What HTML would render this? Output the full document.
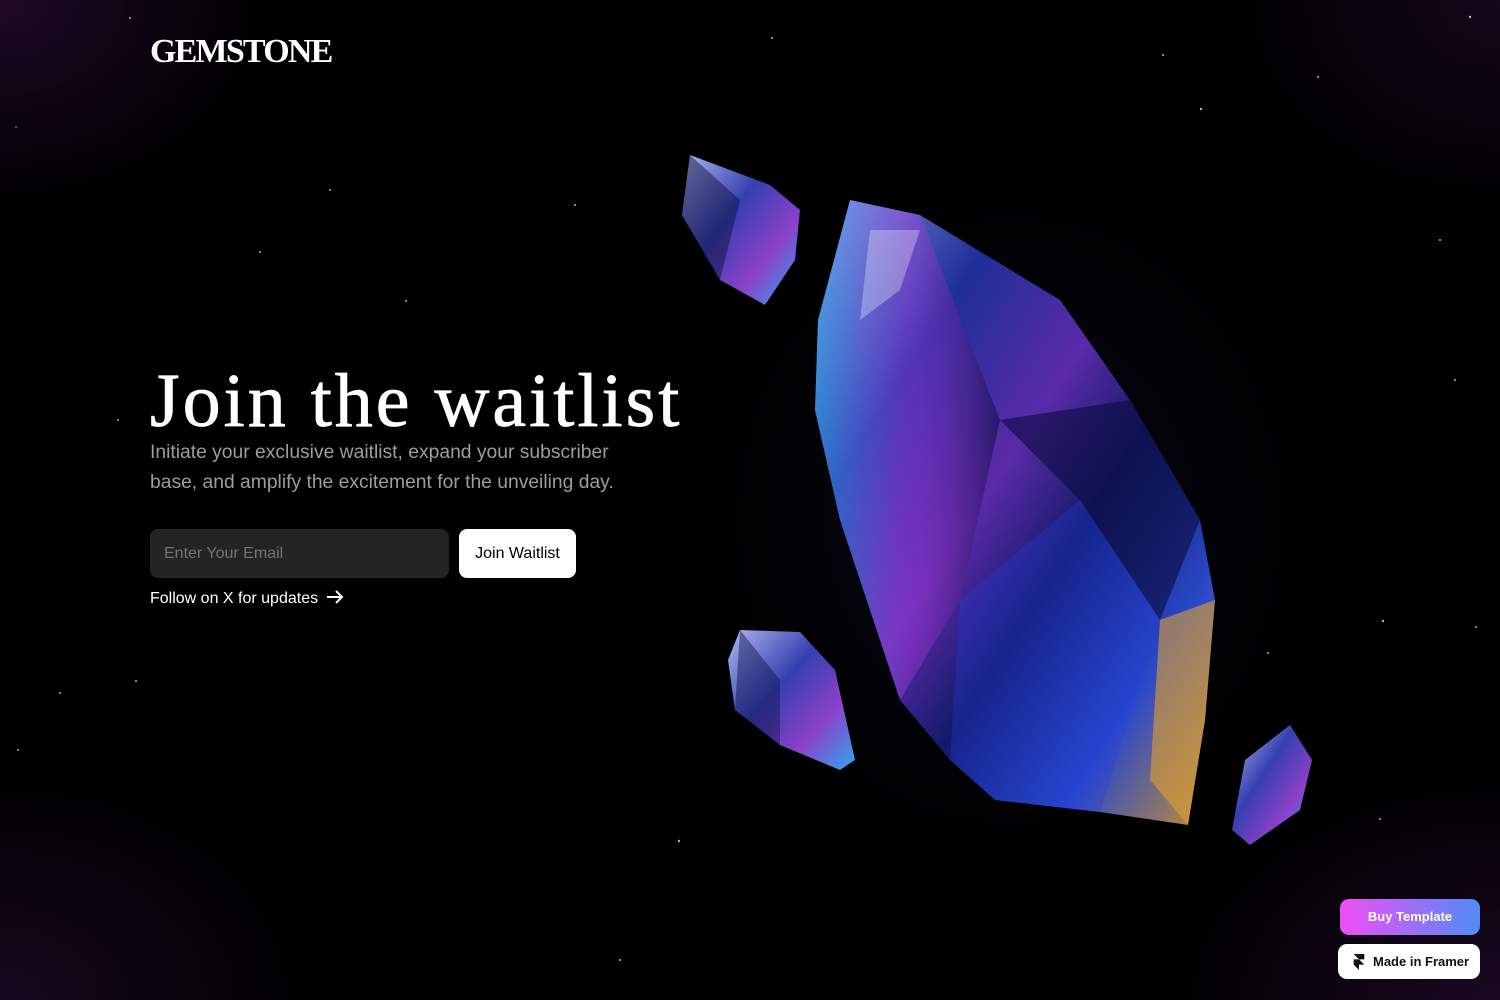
<!DOCTYPE html>
<html><head><meta charset="utf-8"><style>
html,body{margin:0;padding:0;width:1500px;height:1000px;overflow:hidden;background:#000;font-family:"Liberation Sans",sans-serif}
.bg{position:absolute;inset:0;background:
radial-gradient(ellipse 260px 200px at 0 0,rgba(70,20,90,.45),transparent),
radial-gradient(ellipse 300px 220px at 0 1000px,rgba(60,20,80,.4),transparent),
radial-gradient(ellipse 260px 200px at 1500px 0,rgba(60,20,80,.35),transparent),
radial-gradient(ellipse 320px 220px at 1500px 1000px,rgba(70,20,90,.4),transparent),#000}
.logo{position:absolute;left:150px;top:33px;font-family:"Liberation Serif",serif;font-weight:bold;font-size:34px;color:#fff;letter-spacing:-1.8px}
h1{position:absolute;left:150px;top:358px;margin:0;font-family:"Liberation Serif",serif;font-weight:normal;font-size:76px;color:#fff;letter-spacing:3px;white-space:nowrap;-webkit-text-stroke:.8px #fff}
.sub{position:absolute;left:150px;top:438px;width:500px;font-size:19.3px;line-height:30px;color:#9d9d9d}
.inp{position:absolute;left:150px;top:529px;width:299px;height:49px;background:#242424;border-radius:8px;color:#727272;font-size:16px;line-height:49px;box-sizing:border-box;padding-left:14px}
.btn{position:absolute;left:459px;top:529px;width:117px;height:49px;background:#fff;border-radius:8px;color:#000;font-size:16px;line-height:49px;text-align:center}
.fol{position:absolute;left:150px;top:590px;color:#fff;font-size:16px}
.buy{position:absolute;left:1340px;top:899px;width:140px;height:36px;border-radius:9px;background:linear-gradient(90deg,#f04ff4,#4f8cf8);color:#fff;font-weight:bold;font-size:13px;text-align:center;line-height:36px}
.fr{position:absolute;left:1338px;top:944px;width:142px;height:35px;border-radius:9px;background:#fff;color:#111;font-weight:bold;font-size:13px;line-height:35px;box-sizing:border-box;padding-left:35px}
</style></head><body>
<div class="bg"></div>
<svg width="1500" height="1000" style="position:absolute;left:0;top:0">
<defs>
<linearGradient id="g1" x1="0" y1="0" x2="1" y2="1">
<stop offset="0" stop-color="#8a94d8"/><stop offset=".25" stop-color="#1e2f9a"/><stop offset=".45" stop-color="#5a2aa8"/><stop offset=".6" stop-color="#121a68"/><stop offset=".8" stop-color="#2a48c8"/><stop offset="1" stop-color="#c89030"/>
</linearGradient>
<linearGradient id="g2" x1="0" y1="0" x2="1" y2="0">
<stop offset="0" stop-color="#20c8ff" stop-opacity=".45"/><stop offset=".5" stop-color="#d040ff" stop-opacity=".3"/><stop offset="1" stop-color="#0a0c40" stop-opacity=".6"/>
</linearGradient>
<linearGradient id="g3" x1="0" y1="0" x2="1" y2="1">
<stop offset="0" stop-color="#b0b8f0"/><stop offset=".4" stop-color="#3440b0"/><stop offset=".7" stop-color="#8a40c8"/><stop offset="1" stop-color="#30a8f0"/>
</linearGradient>
<radialGradient id="glow"><stop offset="0" stop-color="#3040a0" stop-opacity=".25"/><stop offset="1" stop-color="#000" stop-opacity="0"/></radialGradient>
</defs>
<g fill="#fff" opacity=".7">
<circle cx="130" cy="18" r="1"/><circle cx="16" cy="127" r="1" fill="#5af"/><circle cx="1201" cy="109" r="1.2"/><circle cx="1318" cy="77" r="1"/><circle cx="1470" cy="17" r="1.2"/><circle cx="406" cy="301" r="1"/><circle cx="260" cy="252" r="1"/><circle cx="118" cy="420" r="1"/><circle cx="1383" cy="621" r="1.2"/><circle cx="1455" cy="380" r="1"/><circle cx="1268" cy="653" r="1"/><circle cx="679" cy="841" r="1.2"/><circle cx="136" cy="681" r="1"/><circle cx="1380" cy="819" r="1"/><circle cx="620" cy="960" r="1"/><circle cx="1476" cy="627" r="1"/><circle cx="575" cy="205" r="1"/><circle cx="1163" cy="55" r="1"/><circle cx="772" cy="38" r="1"/><circle cx="60" cy="693" r="1"/><circle cx="330" cy="190" r="1"/><circle cx="18" cy="750" r="1"/><circle cx="1440" cy="240" r="1"/>
</g>
<ellipse cx="1010" cy="520" rx="340" ry="380" fill="url(#glow)"/>
<polygon points="850,200 920,215 1060,300 1130,400 1200,520 1215,600 1205,720 1188,825 1100,812 995,800 950,760 900,700 840,520 815,410 818,320" fill="url(#g1)"/>
<polygon points="850,200 920,215 1000,420 960,600 900,700 840,520 815,410 818,320" fill="url(#g2)"/>
<polygon points="1000,420 1130,400 1200,520 1160,620 1080,500" fill="#0a0c40" opacity=".6"/>
<polygon points="960,600 1080,500 1160,620 1100,812 995,800 950,760" fill="#2040e0" opacity=".3"/>
<polygon points="1160,620 1215,600 1205,720 1188,825 1150,780" fill="#e0a030" opacity=".6"/>
<polygon points="870,230 920,230 900,290 860,320" fill="#fff" opacity=".3"/>
<polygon points="690,155 770,185 800,210 795,260 765,305 720,280 682,215" fill="url(#g3)"/>
<polygon points="690,155 740,200 720,280 682,215" fill="#0a0830" opacity=".45"/>
<polygon points="740,630 800,632 835,670 855,760 840,770 780,745 735,710 728,660" fill="url(#g3)"/>
<polygon points="740,630 780,680 780,745 735,710" fill="#10104a" opacity=".45"/>
<polygon points="1290,725 1312,760 1300,810 1250,845 1232,830 1245,760" fill="url(#g3)"/>
</svg>
<div class="logo">GEMSTONE</div>
<h1>Join the waitlist</h1>
<div class="sub">Initiate your exclusive waitlist, expand your subscriber base, and amplify the excitement for the unveiling day.</div>
<div class="inp">Enter Your Email</div>
<div class="btn">Join Waitlist</div>
<div class="fol">Follow on X for updates <svg width="18" height="14" viewBox="0 0 18 14" style="vertical-align:-1px;margin-left:3px"><path d="M1 7h15M10 1l6 6-6 6" stroke="#fff" stroke-width="2" fill="none"/></svg></div>
<div class="buy">Buy Template</div>
<div class="fr"><svg width="12" height="16" viewBox="0 0 12 18" style="position:absolute;left:15px;top:10px"><path d="M0 0h12v6H6zM0 6h6l6 6H6v6L0 12z" fill="#111"/></svg>Made in Framer</div>
</body></html>
